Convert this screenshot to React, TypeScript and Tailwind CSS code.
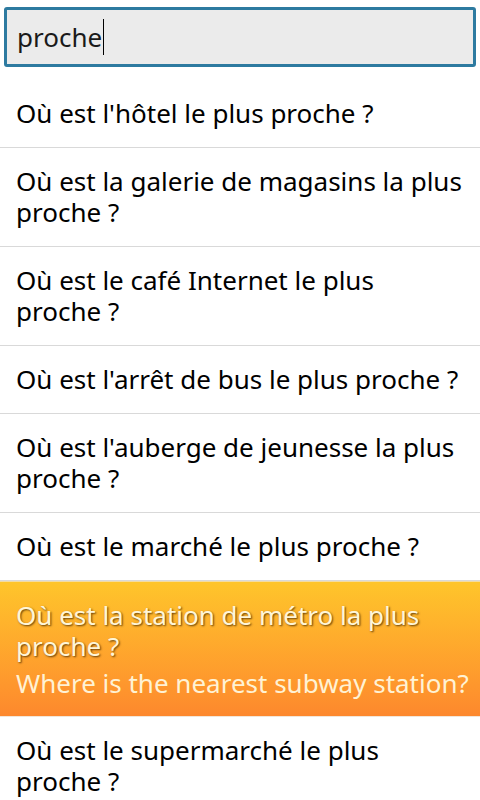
import React from "react";

const PHRASES = [
  "Où est l'hôtel le plus proche ?",
  "Où est la galerie de magasins la plus proche ?",
  "Où est le café Internet le plus proche ?",
  "Où est l'arrêt de bus le plus proche ?",
  "Où est l'auberge de jeunesse la plus proche ?",
  "Où est le marché le plus proche ?",
];

function Row({ text }: { text: string }) {
  return (
    <li className="border-b border-[#d9d9d9] py-[18px] pr-4 pl-4 text-[26px] leading-[31px] text-black">
      {text}
    </li>
  );
}

export default function App() {
  return (
    <div
      className="h-[800px] w-[480px] overflow-hidden bg-white"
      style={{ fontFamily: '"Noto Sans", "Open Sans", sans-serif' }}
    >
      <div className="px-1 pt-[7px] pb-[13px]">
        <div className="flex h-[60px] items-center rounded-[3px] border-[3px] border-[#2d7aa0] bg-[#ebebeb] px-[10px]">
          <span className="text-[26px] leading-[31px] text-[#1a1a1a]">proche</span>
          <span className="ml-px h-[36px] w-px bg-black" />
        </div>
      </div>
      <ul>
        {PHRASES.map((p) => (
          <Row key={p} text={p} />
        ))}
        <li className="border-t border-[#f3dca0] bg-gradient-to-b from-[#fec52b] to-[#fd882d] pt-[18px] pr-1 pb-[17px] pl-4 text-[26px] leading-[31px]">
          <div className="pr-3 text-[#fff6d8] [text-shadow:1px_1px_2px_rgba(70,40,0,0.85)]">
            Où est la station de métro la plus proche ?
          </div>
          <div className="mt-[6px] whitespace-nowrap text-[#fff2d4]">
            Where is the nearest subway station?
          </div>
        </li>
        <li className="border-t border-[#f2e6d8] py-[18px] pr-4 pl-4 text-[26px] leading-[31px] text-black">
          Où est le supermarché le plus proche ?
        </li>
      </ul>
    </div>
  );
}
